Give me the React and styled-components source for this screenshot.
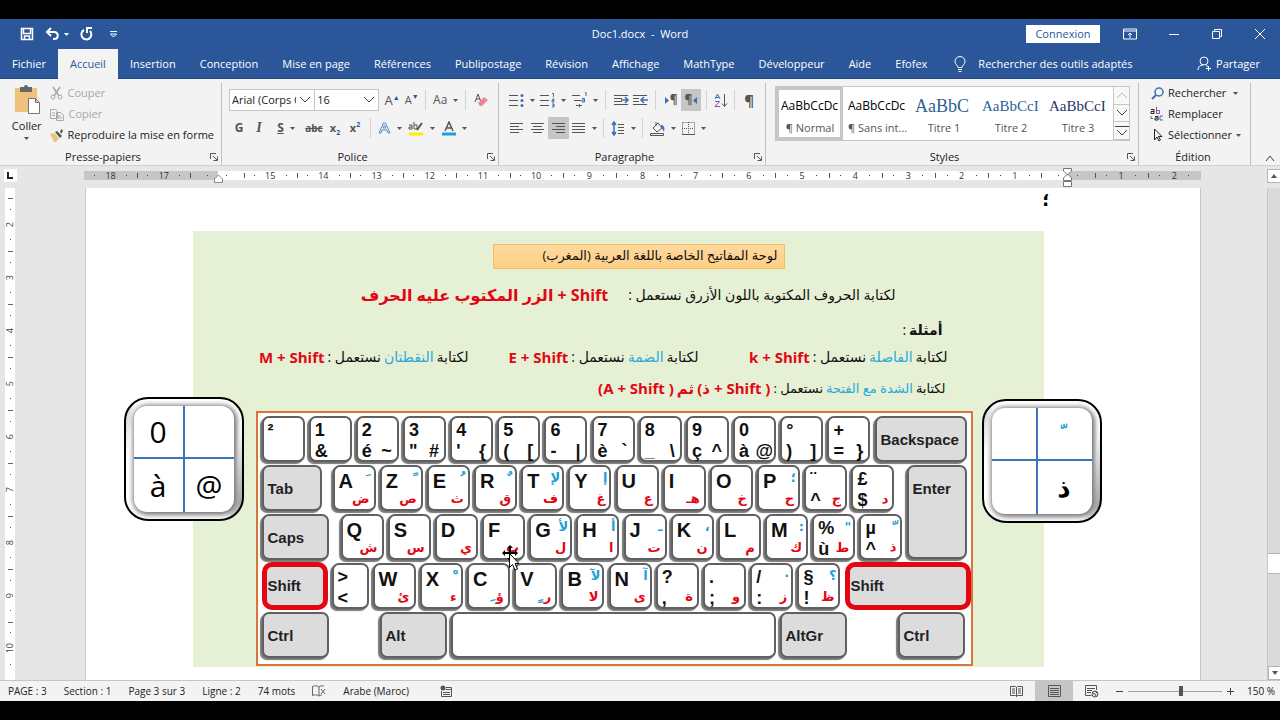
import React from "react";
import styled, { createGlobalStyle, css } from "styled-components";

const ui = '"Open Sans", "Noto Sans", sans-serif';
const arabic = '"Open Sans", "DejaVu Sans", sans-serif';

const GlobalStyle = createGlobalStyle`
  * { box-sizing: border-box; }
  body { margin: 0; background: #000; font-family: ${ui}; font-size: 11px; line-height: 16px; color: #222; }
  button, input, select { font: inherit; color: inherit; margin: 0; }
  button { background: none; border: 0; padding: 0; cursor: pointer; }
  svg { display: block; flex: none; }
`;

const Letterbox = styled.div`
  min-height: 100vh;
  padding: 19px 0;
  background: #000;
  display: flex;
  flex-direction: column;
`;

const Window = styled.div`
  flex: 1;
  display: flex;
  flex-direction: column;
  background: #e6e6e6;
  overflow: hidden;
`;

/* Title bar and tabs */
const TitleBar = styled.header`
  height: 30px;
  background: #2b579a;
  color: #fff;
  display: grid;
  grid-template-columns: 1fr auto 1fr;
  align-items: center;
`;

const QuickAccess = styled.div`
  display: flex;
  align-items: center;
  gap: 10px;
  padding-left: 19px;
`;

const IconButton = styled.button`
  display: flex;
  align-items: center;
  justify-content: center;
  gap: 4px;
`;

const WindowControls = styled.div`
  display: flex;
  justify-content: flex-end;
  align-items: center;
  padding-right: 14px;
  gap: 31px;
`;

const SignIn = styled.button`
  width: 74px;
  height: 18px;
  margin-right: -8px;
  background: #fff;
  color: #2b579a;
`;

const TabBar = styled.nav`
  height: 30px;
  background: #2b579a;
  color: #fff;
  display: flex;
  align-items: stretch;
  border-bottom: 1px solid #1e4682;
`;

const Tab = styled.button`
  padding: 0 12px;
  height: 29px;
  white-space: nowrap;
  ${(p) => p.$active && css`background: #f3f3f3; color: #2b579a; height: 30px;`}
`;

const TellMe = styled.label`
  display: flex;
  align-items: center;
  gap: 12px;
  padding-left: 15px;
`;

const TellMeInput = styled.input`
  width: 170px;
  border: 0;
  padding: 0;
  background: transparent;
  &::placeholder { color: #fff; opacity: 1; }
`;

const Share = styled(IconButton)`
  margin-left: auto;
  padding-right: 20px;
`;

/* Ribbon */
const Ribbon = styled.section`
  height: 87px;
  background: #f3f3f3;
  border-bottom: 1px solid #d2d2d2;
  display: flex;
  color: #444;
`;

const Group = styled.section`
  ${(p) => (p.$width ? css`width: ${p.$width}px;` : css`flex: 1; min-width: 0;`)}
  margin-top: 4px;
  border-right: 1px solid #c0c0c0;
  display: flex;
  flex-direction: column;
`;

const GroupBody = styled.div`
  flex: 1;
  padding: 0 7px;
  display: flex;
  ${(p) => p.$stack && css`flex-direction: column; padding-top: 6px; gap: 6px;`}
`;

const GroupFooter = styled.footer`
  height: 16px;
  padding-right: 3px;
  display: grid;
  grid-template-columns: 1fr auto 1fr;
  align-items: center;
  color: #222;
  &::before { content: ""; }
  & > span { margin-right: ${(p) => (p.$launcher ? 12 : 0)}px; }
  & > button { justify-self: end; }
`;

const PasteButton = styled.button`
  width: 40px;
  display: flex;
  flex-direction: column;
  align-items: center;
  gap: 3px;
  color: #222;
  padding-top: 2px;
`;

const CommandList = styled.div`
  display: flex;
  flex-direction: column;
  gap: 5px;
  padding-top: 2px;
  margin-left: 4px;
`;

const Command = styled.button`
  height: 16px;
  display: flex;
  align-items: center;
  gap: 4px;
  color: ${(p) => (p.$dim ? "#a8a8a8" : "#222")};
  white-space: nowrap;
`;

const ToolRow = styled.div`
  height: 22px;
  display: flex;
  align-items: center;
`;

const Tool = styled.button`
  width: ${(p) => p.$w || 20}px;
  height: 22px;
  display: flex;
  align-items: center;
  justify-content: center;
  gap: ${(p) => (p.$tight ? 1 : 6)}px;
  background: ${(p) => (p.$on ? "#c6c6c6" : "transparent")};
  color: #555;
`;

const Divider = styled.i`
  width: 1px;
  height: 20px;
  margin: 0 5px;
  background: #d2d2d2;
`;

const Glyph = styled.span`
  font-size: ${(p) => p.$size || 12}px;
  font-weight: ${(p) => (p.$bold ? 700 : 400)};
  font-style: ${(p) => (p.$italic ? "italic" : "normal")};
  font-family: ${(p) => (p.$serif ? '"Liberation Serif", serif' : ui)};
  text-decoration: ${(p) => p.$deco || "none"};
  line-height: 16px;
  sub, sup { font-size: 7px; line-height: 0; color: #2b579a; }
`;

const Picker = styled.label`
  position: relative;
  width: ${(p) => p.$w}px;
  height: 22px;
  margin-right: ${(p) => (p.$last ? 2 : -1)}px;
  background: #fff;
  border: 1px solid #c6c6c6;
  select {
    appearance: none;
    width: 100%;
    height: 20px;
    padding: 0 18px 0 2px;
    border: 0;
    background: transparent;
    color: #222;
  }
  svg { position: absolute; right: 3px; top: 6px; pointer-events: none; }
`;

/* Style gallery */
const Gallery = styled.div`
  flex: 1;
  min-width: 0;
  height: 55px;
  margin: 3px 1px 0 2px;
  background: #fff;
  border: 1px solid #c6c6c6;
  display: flex;
`;

const Tiles = styled.div`
  flex: 1;
  min-width: 0;
  display: flex;
  overflow: hidden;
`;

const Tile = styled.button`
  width: 67px;
  flex: none;
  padding: 4px 1px 1px 2px;
  border: 3px solid ${(p) => (p.$on ? "#c6c6c6" : "transparent")};
  display: flex;
  flex-direction: column;
  justify-content: space-between;
  color: #555;
`;

const Sample = styled.span`
  width: 100%;
  height: 24px;
  overflow: hidden;
  white-space: nowrap;
  text-align: left;
  line-height: 24px;
  font-size: ${(p) => p.$size || 12}px;
  font-family: ${(p) => (p.$serif ? '"Liberation Serif", serif' : ui)};
  color: ${(p) => p.$color || "#000"};
`;

const TileName = styled.span`
  width: 100%;
  text-align: center;
  line-height: 16px;
  white-space: nowrap;
`;

const GalleryScroll = styled.div`
  width: 16px;
  display: flex;
  flex-direction: column;
  border-left: 1px solid #c6c6c6;
  button {
    flex: 1;
    display: flex;
    align-items: center;
    justify-content: center;
    border-bottom: 1px solid #c6c6c6;
    background: #f8f8f8;
  }
`;

const Collapse = styled.button`
  width: 29px;
  display: flex;
  align-items: flex-end;
  justify-content: center;
  padding: 0 0 3px 8px;
`;

/* Rulers */
const RulerBar = styled.div`
  height: 22px;
  padding-bottom: 3px;
  display: grid;
  grid-template-columns: 18px minmax(0, 1fr) 13px;
  align-items: center;
`;

const TabStop = styled.button`
  width: 13px;
  height: 13px;
  margin-left: 4px;
  background: #fff;
  display: flex;
  align-items: center;
  justify-content: center;
`;

const Ruler = styled.div`
  position: relative;
  width: 1117px;
  max-width: 100%;
  margin: 0 auto;
  height: 9px;
  display: flex;
  background: linear-gradient(90deg, #c6c6c6 12%, #fff 12%, #fff 88%, #c6c6c6 88%);
`;

const RulerCell = styled.span`
  flex: 1;
  display: flex;
  align-items: center;
  justify-content: space-evenly;
  font-size: 9px;
  line-height: 9px;
  color: #333;
  &::before, &::after { content: ""; width: 1px; height: 1px; background: #444; }
`;

const Tick = styled.span`
  width: 1px;
  margin: 2px -1px 2px 0;
  background: #555;
  z-index: 1;
`;

const Marker = styled.span`
  position: absolute;
  left: ${(p) => p.$at}%;
  top: ${(p) => (p.$hour ? -3 : 3)}px;
  margin-left: -4px;
`;

const Workspace = styled.main`
  flex: 1;
  display: grid;
  grid-template-columns: 18px minmax(0, 1fr) 13px;
`;

const SideRuler = styled.div`
  width: 10px;
  margin-left: 5px;
  padding-top: 10px;
  background: #fff;
  display: flex;
  flex-direction: column;
`;

const SideCell = styled.span`
  flex: none;
  height: 53px;
  display: flex;
  flex-direction: column;
  align-items: center;
  justify-content: space-evenly;
  font-size: 9px;
  line-height: 10px;
  color: #444;
  background: linear-gradient(#666, #666) center top / 5px 1px no-repeat;
  &::before, &::after { content: ""; width: 1px; height: 1px; background: #555; }
  b { font-weight: 400; writing-mode: vertical-rl; transform: rotate(180deg); }
`;

const ScrollBar = styled.div`
  background: #dadada;
  border-left: 1px solid #c6c6c6;
  display: flex;
  flex-direction: column;
  justify-content: flex-end;
`;

const ScrollThumb = styled.div`
  height: 21px;
  background: #fff;
  border: 1px solid #b4b4b4;
  border-width: 1px 0;
  margin-bottom: 92px;
`;

const ScrollArrow = styled.button`
  height: 14px;
  background: #fff;
  border: 1px solid #b4b4b4;
  border-right: 0;
  display: flex;
  align-items: center;
  justify-content: center;
`;

/* Document */
const Page = styled.article`
  width: 1116px;
  max-width: 100%;
  margin: 0 auto;
  padding: 0 156px 13px 107px;
  background: #fff;
  border-left: 1px solid #c6c6c6;
  border-right: 1px solid #c6c6c6;
`;

const Lead = styled.p`
  margin: 0;
  height: 43px;
  direction: rtl;
  font: 700 18px/22px ${arabic};
  color: #000;
  margin-right: -6px;
`;

const Lesson = styled.section`
  position: relative;
  background: #e5f0d4;
  height: 436px;
  padding: 13px 71px 1px 63px;
  display: flex;
  flex-direction: column;
  font-family: ${arabic};
`;

const LessonTitle = styled.h1`
  margin: 0 0 8px 237px;
  width: 292px;
  height: 25px;
  padding-right: 6px;
  background: linear-gradient(#ffd9a0, #fdcf85);
  border: 1px solid #f5bf5c;
  font: 400 13px/20px ${arabic};
  color: #111;
  direction: rtl;
`;

const Line = styled.p`
  margin: 0;
  height: ${(p) => p.$h}px;
  direction: rtl;
  display: flex;
  align-items: center;
  gap: ${(p) => p.$gap || 3}px;
  padding-right: ${(p) => p.$inset || 26}px;
  font-size: ${(p) => p.$size || 14}px;
  line-height: 20px;
  color: #111;
  white-space: nowrap;
`;

const Example = styled.span`
  width: ${(p) => p.$w}px;
  flex: none;
  display: flex;
  gap: 3px;
`;

const Blue = styled.span`color: #2aa9dc;`;

const Red = styled.strong`
  color: #e30613;
  direction: ${(p) => p.$dir || "ltr"};
  font-size: ${(p) => p.$size || 15}px;
`;

/* Keyboard */
const Keyboard = styled.div`
  width: 717px;
  margin-top: auto;
  height: 255px;
  border: 2px solid #d9743a;
  background: #fff;
  padding: 3px 4px 2px;
  display: flex;
  flex-direction: column;
  gap: 3px;
`;

const KeyRow = styled.div`
  height: 46px;
  display: flex;
  gap: ${(p) => p.$gap || 4}px;
`;

const KeyRun = styled.div`
  width: ${(p) => p.$w}px;
  flex: none;
  display: flex;
  justify-content: space-between;
`;

const MiddleBlock = styled.div`
  height: 95px;
  display: flex;
  justify-content: space-between;
`;

const MiddleRows = styled.div`
  display: flex;
  flex-direction: column;
  gap: 3px;
`;

const KeyCap = styled.div`
  width: ${(p) => p.$w || 43}px;
  height: ${(p) => p.$h || 46}px;
  flex: none;
  margin-left: ${(p) => p.$push || 0}px;
  border: 2px solid #606060;
  border-radius: 7px;
  background: ${(p) => (p.$grey ? "#dcdcdc" : "#fff")};
  box-shadow: -2px 2px 1px #777;
  display: flex;
  flex-direction: column;
  padding: 1px 1px 0 4px;
  color: #111;
  ${(p) => p.$red && css`
    border: 5px solid #e30613;
    border-radius: 10px;
    box-shadow: none;
    height: 48px;
    margin-top: -1px;
    padding-left: 1px;
    padding-top: 0;
    & > span { margin-top: 9px; }
  `}
`;

const KeyName = styled.span`
  font: 700 15px/20px "Liberation Sans", sans-serif;
  margin-top: 11px;
  color: #222;
`;

const KeyLine = styled.span`
  height: 21px;
  display: flex;
  justify-content: space-between;
  ${(p) => p.$inset && css`padding-right: 4px;`}
`;

const Main = styled.b`
  font: 700 ${(p) => (p.$small ? 18 : 20)}px/${(p) => (p.$small ? 22 : 26)}px "Liberation Sans", sans-serif;
`;

const Mark = styled.span`
  font: 700 ${(p) => p.$size || 13}px/${(p) => (p.$size ? 26 : 20)}px "DejaVu Sans", sans-serif;
  color: ${(p) => p.$c};
  margin-right: ${(p) => (p.$c === "#e30613" ? 3 : 1)}px;
`;

const LowMark = styled.span`
  font: 700 18px/12px "DejaVu Sans", sans-serif;
  color: #1e9fd8;
`;

const LowPair = styled.span`
  display: flex;
`;

const BigKey = styled.figure`
  position: absolute;
  margin: 0;
  ${(p) => (p.$side === "left" ? css`left: -69px; top: 166px;` : css`right: -58px; top: 168px;`)}
  width: 120px;
  height: 124px;
  padding: 7px 8px;
  border: 2px solid #000;
  border-radius: 24px;
  background: linear-gradient(100deg, #c4c4c4, #fff 8%, #fff 88%, #8c8c8c);
`;

const BigKeyFace = styled.div`
  height: 106px;
  border-radius: 13px;
  background: #fff;
  box-shadow: 1px 1px 5px 2px #777;
  display: grid;
  grid-template-columns: ${(p) => p.$first || 51}px 1fr;
  grid-template-rows: 1fr 1fr;
  & > span {
    display: flex;
    align-items: center;
    justify-content: center;
    font-size: 30px;
    line-height: 40px;
    color: #000;
  }
  & > span:nth-child(odd) { border-right: 2px solid #3c74ba; }
  & > span:nth-child(-n + 2) { border-bottom: 2px solid #3c74ba; }
`;

const Pointer = styled.span`
  position: absolute;
  left: 309px;
  top: 314px;
`;

/* Status bar */
const StatusBar = styled.footer`
  height: 21px;
  background: #f3f3f3;
  border-top: 1px solid #c6c6c6;
  padding: 0 5px 0 8px;
  display: flex;
  align-items: center;
  gap: 17px;
  color: #222;
  font-size: 10px;
  white-space: nowrap;
`;

const MacroIcon = styled.span`margin-left: 14px;`;

const ViewTools = styled.div`
  margin-left: auto;
  height: 20px;
  display: flex;
  align-items: center;
`;

const ViewButton = styled.button`
  width: 38px;
  height: 20px;
  display: flex;
  align-items: center;
  justify-content: center;
  background: ${(p) => (p.$on ? "#c6c6c6" : "transparent")};
`;

const ZoomButton = styled.button`
  width: 17px;
  display: flex;
  justify-content: center;
`;

const ZoomSlider = styled.input`
  appearance: none;
  width: 94px;
  height: 12px;
  background: linear-gradient(#a0a0a0, #a0a0a0) center / 100% 1px no-repeat;
  &::-webkit-slider-thumb {
    appearance: none;
    width: 4px;
    height: 10px;
    background: #555;
  }
`;

const ZoomValue = styled.button`
  width: 36px;
  text-align: right;
`;

/* Icons */
const Svg = ({ w = 16, h = 16, children, ...rest }) => (
  <svg width={w} height={h} viewBox={`0 0 ${w} ${h}`} fill="none" stroke="currentColor" aria-hidden="true" {...rest}>{children}</svg>
);
const Caret = () => <Svg w={5} h={3} stroke="none"><path d="M0 0h5L2.500 3z" fill="#555" /></Svg>;
const Chevron = ({ up, w = 12, color = "#444" }) => (
  <Svg w={w} h={8} stroke={color}><path d={up ? `M1 7L${w / 2} 2L${w - 1} 7` : `M1 1L${w / 2} 6L${w - 1} 1`} /></Svg>
);
const lines = (xs, ys) => ys.map((y, i) => `M${xs[i][0]} ${y + 0.5}H${xs[i][1]}`).join("");
const AlignIcon = ({ kind }) => {
  const xs = {
    left: [[1, 14], [1, 10], [1, 14], [1, 10]],
    center: [[1, 14], [3, 12], [1, 14], [3, 12]],
    right: [[1, 14], [5, 14], [1, 14], [5, 14]],
    justify: [[1, 14], [1, 14], [1, 14], [1, 14]],
  }[kind];
  return <Svg w={15} h={12}><path d={lines(xs, [1, 4, 7, 10])} /></Svg>;
};
const ListIcon = ({ kind }) => (
  <Svg w={15} h={16}>
    <path d={kind === "multi" ? "M0 3.500H8M2 8.500H9M4 13.500H10" : "M0 3.500H9M0 8.500H9M0 13.500H9"} />
    {kind === "bullet" && <g fill="#3c6eb4" stroke="none"><circle cx="13" cy="3.500" r="1.500" /><circle cx="13" cy="8.500" r="1.500" /><circle cx="13" cy="13.500" r="1.500" /></g>}
    {kind === "number" && <path stroke="#3c6eb4" d="M12 1.500h1.500V5M12 7h2v1.500h-2v1.500h2.500M12 12h2v3h-2M12.500 13.500H14" />}
    {kind === "multi" && <path stroke="#3c6eb4" d="M13 .5h1V4M10 6.500h2.500V10H10V8h2.500M7.500 12v3.500" />}
  </Svg>
);
const IndentIcon = ({ out }) => (
  <Svg w={17} h={13}>
    <path d={out ? "M1 1.500H15M1 4.500h6M1 7.500h6M1 10.500H15" : "M1 1.500H15M1 4.500h8M1 7.500h8M1 10.500H15"} />
    <path stroke="#3c6eb4" strokeWidth="1.500" d={out ? "M16 6H9M12 3L9 6l3 3" : "M8 6h7M12 3l3 3-3 3"} />
  </Svg>
);
const Launcher = () => (
  <IconButton aria-label="Options du groupe">
    <Svg w={8} h={8} stroke="#555"><path d="M.5 6V.5H6M3 3l4 4M7.500 3.500v4h-4" /></Svg>
  </IconButton>
);
const Pilcrow = ({ size = 14 }) => <Glyph $size={size} $bold>¶</Glyph>;

const Footer = ({ name, launcher = true }) => (
  <GroupFooter $launcher={launcher}><span>{name}</span>{launcher && <Launcher />}</GroupFooter>
);

const BLUE = "#1e9fd8";
const RED = "#e30613";

const digitKeys = [
  ["²", "", ""], ["1", "&", ""], ["2", "é", "~"], ["3", '"', "#"], ["4", "'", "{"], ["5", "(", "["],
  ["6", "-", "|"], ["7", "è", "`"], ["8", "_", "\\"], ["9", "ç", "^"], ["0", "à", "@"], ["°", ")", "]"], ["+", "=", "}"],
];
/* main letter, Shift mark, Arabic letter, lower-left sign, lower mark */
const rowA = [
  ["A", "\uFE76", "ض"], ["Z", "\uFE70", "ص"], ["E", "\uFE78", "ث"], ["R", "\uFE72", "ق"], ["T", "لإ", "ف"], ["Y", "إ", "غ"],
  ["U", "", "ع"], ["I", "", "هـ"], ["O", "", "خ"], ["P", "؛", "ح"], ["¨", "", "ج", "^"], ["£", "", "د", "$"],
];
const rowQ = [
  ["Q", "", "ش"], ["S", "", "س"], ["D", "", "ي"], ["F", "", "ب"], ["G", "لأ", "ل"], ["H", "أ", "ا"],
  ["J", "ـ", "ت"], ["K", "،", "ن"], ["L", "", "م"], ["M", ":", "ك"], ["%", '"', "ط", "ù"], ["µ", "\uFE7C", "ذ", "^"],
];
const rowW = [
  ["W", "", "ئ"], ["X", "\uFE7E", "ء"], ["C", "", "ؤ", "", "\uFE7A"], ["V", "", "ر", "", "\uFE74"], ["B", "لآ", "لا"], ["N", "آ", "ى"],
  ["?", "", "ة", ","], [".", "", "و", ";"], ["/", "·", "ز", ":"], ["§", "؟", "ظ", "!"],
];
const isDiacritic = (s) => s >= "\uFE70" && s <= "\uFE7F";

const DigitKey = ({ k: [top, left, right] }) => (
  <KeyCap>
    <KeyLine><Main $small>{top}</Main></KeyLine>
    <KeyLine $inset={right !== "@"}><Main $small>{left}</Main><Main $small>{right}</Main></KeyLine>
  </KeyCap>
);
const LetterKey = ({ k: [main, blue, red, sub = "", low = ""] }) => (
  <KeyCap>
    <KeyLine>
      <Main $small={!!sub}>{main}</Main>
      <Mark $c={BLUE} $size={isDiacritic(blue) ? 18 : undefined}>{blue}</Mark>
    </KeyLine>
    <KeyLine>
      <Main $small>{sub}</Main>
      <LowPair>{low && <LowMark>{low}</LowMark>}<Mark $c={RED}>{red}</Mark></LowPair>
    </KeyLine>
  </KeyCap>
);
const NamedKey = ({ children, ...p }) => <KeyCap $grey {...p}><KeyName>{children}</KeyName></KeyCap>;

const tabs = ["Fichier", "Accueil", "Insertion", "Conception", "Mise en page", "Références", "Publipostage", "Révision", "Affichage", "MathType", "Développeur", "Aide", "Efofex"];
const rulerLabels = [18, 17, "", 15, 14, 13, 12, 11, 10, 9, 8, 7, 6, 5, 4, 3, 2, 1, "", 1, 2];

export default function App() {
  return (
    <Letterbox>
      <GlobalStyle />
      <Window>
        <TitleBar>
          <QuickAccess>
            <IconButton aria-label="Enregistrer">
              <Svg><path d="M2.500 2.500h11v11h-11zM4.500 3v4.500h7V3M5.500 13v-3h5v3" strokeWidth="1.500" /></Svg>
            </IconButton>
            <IconButton aria-label="Annuler">
              <Svg w={15}><path strokeWidth="2" d="M6 2L2 6l4 4M2 6h7c5 0 5 7 0 7H8" /></Svg>
              <Svg w={5} h={3} stroke="none"><path d="M0 0h5L2.500 3z" fill="#fff" /></Svg>
            </IconButton>
            <IconButton aria-label="Rétablir">
              <Svg w={15}><path strokeWidth="2" d="M5 4a5 5 0 1 0 6 1M8 7V2h5" /></Svg>
            </IconButton>
            <IconButton aria-label="Personnaliser">
              <Svg w={19} h={8}><path d="M6 1.500h7M6.500 4L9.500 7l3-3z" /></Svg>
            </IconButton>
          </QuickAccess>
          <span>Doc1.docx&nbsp; -&nbsp; Word</span>
          <WindowControls>
            <SignIn>Connexion</SignIn>
            <IconButton aria-label="Options du ruban"><Svg w={14} h={12}><path d="M.5 1h13v10H.5zM1 3h12M7 10V5M5 7l2-2 2 2" /></Svg></IconButton>
            <IconButton aria-label="Réduire"><Svg w={12} h={12}><path d="M1 6.500h10" /></Svg></IconButton>
            <IconButton aria-label="Restaurer"><Svg w={12} h={12}><path d="M1.500 3.500h7v7h-7zM3.500 3V1.500h7v7H9" /></Svg></IconButton>
            <IconButton aria-label="Fermer"><Svg w={12} h={12}><path d="M1 1l10 10M11 1L1 11" /></Svg></IconButton>
          </WindowControls>
        </TitleBar>
        <TabBar>
          {tabs.map((t) => <Tab key={t} $active={t === "Accueil"}>{t}</Tab>)}
          <TellMe>
            <Svg w={12} h={16}><path d="M4 11.500c0-2-3-3-3-6a5 5 0 0 1 10 0c0 3-3 4-3 6zM4 13.500h4M4.500 15.500h3" /></Svg>
            <TellMeInput aria-label="Rechercher des outils adaptés" placeholder="Rechercher des outils adaptés" />
          </TellMe>
          <Share>
            <Svg w={15} h={15}><circle cx="7" cy="5" r="4" /><path d="M1 14c0-3 2-5 5-5M9 9.500l2 1M9 12.500h5M11.500 10v5" /></Svg>
            Partager
          </Share>
        </TabBar>

        <Ribbon>
          <Group $width={222}>
            <GroupBody>
              <PasteButton>
                <Svg w={28} h={30} stroke="none">
                  <path fill="#eec27d" d="M2 3h22v24H2z" /><path fill="#666" d="M7 2h4a2 2 0 0 1 4 0h4v5H7z" />
                  <path fill="#fff" stroke="#777" d="M15.500 13.500h7l4 4v11h-11zM22.500 13.500v4h4" />
                </Svg>
                Coller
                <Caret />
              </PasteButton>
              <CommandList>
                <Command $dim><Svg w={13} h={14}><path strokeWidth="1.500" d="M3 1l6 9M10 1L4 10" /><circle cx="3" cy="11" r="2" /><circle cx="10" cy="11" r="2" /></Svg>Couper</Command>
                <Command $dim><Svg w={14} h={13}><path d="M.5 1.500h5l2 2v7h-7zM2 5h3M2 7.500h3M6.500 4.500h4l3 3v5h-7zM8 8h3M8 10h4" /></Svg>Copier</Command>
                <Command><Svg w={13} h={13} stroke="none"><path fill="#eec27d" d="M0 5l4-1 5 5-3 4H4z" /><path fill="#555" d="M5 3l2-1 5 5-2 2zM10 2l2-2 1 2-2 3z" /></Svg>Reproduire la mise en forme</Command>
              </CommandList>
            </GroupBody>
            <Footer name="Presse-papiers" />
          </Group>

          <Group $width={277}>
            <GroupBody $stack>
              <ToolRow>
                <Picker $w={88}>
                  <select aria-label="Police" defaultValue="a"><option value="a">Arial (Corps CS)</option></select><Chevron />
                </Picker>
                <Picker $w={66} $last>
                  <select aria-label="Taille de police" defaultValue="16"><option>16</option></select><Chevron />
                </Picker>
                <Tool $w={23}><Glyph $size={13}>A<sup>▲</sup></Glyph></Tool>
                <Tool $w={17}><Glyph $size={11}>A<sup>▼</sup></Glyph></Tool>
                <Divider />
                <Tool $w={30}><Glyph $size={12}>Aa</Glyph><Caret /></Tool>
                <Divider />
                <Tool $w={20}><Svg w={14} h={14}><path d="M1 9L4 1l3 8M2 6h4" /><path fill="#e88a9b" stroke="none" d="M4 10l6-6 4 3-6 6H6z" /></Svg></Tool>
              </ToolRow>
              <ToolRow>
                <Tool><Glyph $bold>G</Glyph></Tool>
                <Tool><Glyph $italic $bold $serif $size={14}>I</Glyph></Tool>
                <Tool $w={34}><Glyph $bold $deco="underline">S</Glyph><Caret /></Tool>
                <Tool $w={22}><Glyph $size={10} $bold $deco="line-through">abc</Glyph></Tool>
                <Tool><Glyph $bold $size={11}>x<sub>2</sub></Glyph></Tool>
                <Tool><Glyph $bold $size={11}>x<sup>2</sup></Glyph></Tool>
                <Divider />
                <Tool $w={28}><Svg w={13} h={12} stroke="#5b8ac6"><path d="M1 11L5.500 1h2L12 11h-2L9 8H4l-1 3zM5 6h3L6.500 3z" /></Svg><Caret /></Tool>
                <Tool $w={34}><Svg w={16} h={15}><path stroke="#ffee00" strokeWidth="3" d="M1 13h14" /><path d="M1 4h3v4H1V6h3M6 1v7h3V4H6" /><path strokeWidth="2" d="M14 2L9 9" /></Svg><Caret /></Tool>
                <Tool $w={32}><Svg w={14} h={15}><path stroke="#1e9fd8" strokeWidth="3" d="M0 13h14" /><path strokeWidth="1.500" d="M3 10L7 1l4 9M4.500 7h5" /></Svg><Caret /></Tool>
              </ToolRow>
            </GroupBody>
            <Footer name="Police" />
          </Group>

          <Group $width={267}>
            <GroupBody $stack>
              <ToolRow>
                <Tool $w={32}><ListIcon kind="bullet" /><Caret /></Tool>
                <Tool $w={32}><ListIcon kind="number" /><Caret /></Tool>
                <Tool $w={32}><ListIcon kind="multi" /><Caret /></Tool>
                <Divider />
                <Tool><IndentIcon /></Tool>
                <Tool><IndentIcon out /></Tool>
                <Divider />
                <Tool $tight><Svg w={4} h={7} stroke="none"><path fill="#3c6eb4" d="M0 0l4 3.500L0 7z" /></Svg><Pilcrow size={12} /></Tool>
                <Tool $tight $on><Pilcrow size={12} /><Svg w={4} h={7} stroke="none"><path fill="#3c6eb4" d="M4 0L0 3.500 4 7z" /></Svg></Tool>
                <Divider />
                <Tool $w={18}><Svg w={14} h={15}><path stroke="#3c6eb4" d="M1 6l2.500-5L6 6M2 4.500h3" /><path stroke="#8a4fa0" d="M1 8.500h4.500L1 13.500h5" /><path d="M10.500 1v12M8 10.500l2.500 3 2.500-3" /></Svg></Tool>
                <Divider />
                <Tool $w={18}><Pilcrow size={15} /></Tool>
              </ToolRow>
              <ToolRow>
                <Tool $w={21}><AlignIcon kind="left" /></Tool>
                <Tool $w={21}><AlignIcon kind="center" /></Tool>
                <Tool $w={21} $on><AlignIcon kind="right" /></Tool>
                <Tool $w={29}><AlignIcon kind="justify" /><Caret /></Tool>
                <Divider />
                <Tool $w={28}><Svg w={14} h={15}><path stroke="#3c6eb4" strokeWidth="1.500" d="M3 1v13M1 4l2-3 2 3M1 11l2 3 2-3" /><path d="M7 3.500h6M7 6.500h6M7 9.500h6M7 12.500h6" /></Svg><Caret /></Tool>
                <Divider />
                <Tool $w={30}><Svg w={15} h={15}><path d="M3 7l5-5 4 5-5 4zM6 5V1M.5 12.500h13v2H.5z" /><path fill="#3c6eb4" stroke="none" d="M11 4c3 0 4 3 3 7-1-2-1-3-3-4z" /></Svg><Caret /></Tool>
                <Tool $w={32}><Svg w={13} h={13}><path strokeDasharray="1 1" d="M.5.5h12v12M.5.5v12M6.500 0v12M0 6.500h12" /><path d="M0 12.500h13" /></Svg><Caret /></Tool>
              </ToolRow>
            </GroupBody>
            <Footer name="Paragraphe" />
          </Group>

          <Group>
            <GroupBody>
              <Gallery>
                <Tiles>
                  <Tile $on><Sample>AaBbCcDc</Sample><TileName>¶ Normal</TileName></Tile>
                  <Tile><Sample>AaBbCcDc</Sample><TileName>¶ Sans int...</TileName></Tile>
                  <Tile><Sample $serif $size={18} $color="#2f5f98">AaBbC</Sample><TileName>Titre 1</TileName></Tile>
                  <Tile><Sample $serif $size={15} $color="#2f5f98">AaBbCcI</Sample><TileName>Titre 2</TileName></Tile>
                  <Tile><Sample $serif $size={15} $color="#1f3763">AaBbCcI</Sample><TileName>Titre 3</TileName></Tile>
                </Tiles>
                <GalleryScroll>
                  <button aria-label="Ligne précédente"><Chevron up color="#bbb" /></button>
                  <button aria-label="Ligne suivante"><Chevron /></button>
                  <button aria-label="Autres styles"><Svg w={14} h={12} stroke="#444"><path d="M0 1.500h14M2 5l5 5 5-5" /></Svg></button>
                </GalleryScroll>
              </Gallery>
            </GroupBody>
            <Footer name="Styles" />
          </Group>

          <Group $width={112}>
            <GroupBody>
              <CommandList>
                <Command><Svg w={14} h={13} stroke="#3c6eb4"><circle cx="9" cy="5" r="4" strokeWidth="1.500" /><path strokeWidth="2" d="M6 8l-4 4" /></Svg>Rechercher&nbsp;<Caret /></Command>
                <Command><Svg w={14} h={14}><path d="M1 2.500h3v4H1v-2h3" /><path stroke="#8a4fa0" d="M6.500 0v6.500h3v-3h-3" /><path stroke="#3c6eb4" d="M1 9v2.500h2M13 9h-3v4h3" /><path d="M5 9.500h3V13H5v-2h3" /></Svg>Remplacer</Command>
                <Command><Svg w={14} h={14}><path d="M4.500 1v11l2.500-3 2 4 1.500-1-2-3.500H12z" /></Svg>Sélectionner<Caret /></Command>
              </CommandList>
            </GroupBody>
            <Footer name="Édition" launcher={false} />
          </Group>
          <Collapse aria-label="Réduire le ruban"><Chevron up w={10} /></Collapse>
        </Ribbon>

        <RulerBar>
          <TabStop aria-label="Type de tabulation"><Svg w={7} h={7} strokeWidth="2"><path d="M1 0v6h5" /></Svg></TabStop>
          <Ruler>
            {rulerLabels.map((n, i) => (
              <React.Fragment key={i}>
                {i > 0 && <Tick />}
                <RulerCell>{n}</RulerCell>
              </React.Fragment>
            ))}
            <Marker $at={12}><Svg w={9} h={9} fill="#fff" stroke="#888"><path d="M.5 8.500V5l4-4 4 4v3.500z" /></Svg></Marker>
            <Marker $at={88} $hour><Svg w={9} h={19} fill="#fff" stroke="#777"><path d="M.5.5h8V3L4.500 7 .5 3zM.5 12.500V10l4-4 4 4v2.500zM.5 13.500h8v5h-8z" /></Svg></Marker>
          </Ruler>
          <ScrollArrow aria-label="Défiler vers le haut"><Svg w={6} h={4} stroke="none"><path d="M0 4h6L3 0z" fill="#555" /></Svg></ScrollArrow>
        </RulerBar>

        <Workspace>
          <SideRuler>
            {[2, 3, 4, 5, 6, 7, 8, 9, 10].map((n) => <SideCell key={n}><b>{n}</b></SideCell>)}
          </SideRuler>
          <Page>
            <Lead>؛</Lead>
            <Lesson>
              <LessonTitle>لوحة المفاتيح الخاصة باللغة العربية (المغرب)</LessonTitle>
              <Line $h={36} $inset={77} $gap={20}>
                <span>لكتابة الحروف المكتوبة باللون الأزرق نستعمل :</span>
                <Red $size={16} $dir="rtl">Shift + الزر المكتوب عليه الحرف</Red>
              </Line>
              <Line $h={34} $inset={30}><strong>أمثلة</strong> :</Line>
              <Line $h={20} $gap={1} $inset={25}>
                <Example $w={248}>لكتابة <Blue>الفاصلة</Blue> نستعمل : <Red>k + Shift</Red></Example>
                <Example $w={229}>لكتابة <Blue>الضمة</Blue> نستعمل : <Red>E + Shift</Red></Example>
                <Example $w={210}>لكتابة <Blue>النقطتان</Blue> نستعمل : <Red>M + Shift</Red></Example>
              </Line>
              <Line $h={42} $inset={27} $size={13}>
                لكتابة <Blue>الشدة مع الفتحة</Blue> نستعمل :{" "}
                <Red>(ذ + Shift )</Red> <Red>ثم</Red> <Red>(A + Shift )</Red>
              </Line>
              <Keyboard>
                <KeyRow>
                  <KeyRun $w={609}>{digitKeys.map((k) => <DigitKey key={k[0]} k={k} />)}</KeyRun>
                  <NamedKey $w={92}>Backspace</NamedKey>
                </KeyRow>
                <MiddleBlock>
                  <MiddleRows>
                    <KeyRow $gap={11}>
                      <NamedKey $w={60}>Tab</NamedKey>
                      <KeyRun $w={562}>{rowA.map((k) => <LetterKey key={k[0]} k={k} />)}</KeyRun>
                    </KeyRow>
                    <KeyRow $gap={12}>
                      <NamedKey $w={67}>Caps</NamedKey>
                      <KeyRun $w={562}>{rowQ.map((k) => <LetterKey key={k[0]} k={k} />)}</KeyRun>
                    </KeyRow>
                  </MiddleRows>
                  <NamedKey $w={60} $h={94}>Enter</NamedKey>
                </MiddleBlock>
                <KeyRow>
                  <NamedKey $w={66} $red>Shift</NamedKey>
                  <KeyCap $w={37}><KeyLine><Main $small>&gt;</Main></KeyLine><KeyLine><Main $small>&lt;</Main></KeyLine></KeyCap>
                  <KeyRun $w={468}>{rowW.map((k) => <LetterKey key={k[0]} k={k} />)}</KeyRun>
                  <NamedKey $w={126} $red>Shift</NamedKey>
                </KeyRow>
                <KeyRow>
                  <NamedKey $w={67}>Ctrl</NamedKey>
                  <NamedKey $w={67} $push={47}>Alt</NamedKey>
                  <KeyCap $w={325} />
                  <NamedKey $w={67}>AltGr</NamedKey>
                  <NamedKey $w={67} $push={47}>Ctrl</NamedKey>
                </KeyRow>
              </Keyboard>
              <BigKey $side="left"><BigKeyFace><span>0</span><span /><span>à</span><span>@</span></BigKeyFace></BigKey>
              <BigKey $side="right">
                <BigKeyFace $first={46}><span /><span><Mark $c={BLUE} $size={20}>{"\uFE7C"}</Mark></span><span /><span><Mark $c="#000" $size={26}>ذ</Mark></span></BigKeyFace>
              </BigKey>
              <Pointer>
                <Svg w={18} h={26} stroke="none">
                  <path fill="#000" d="M8 0l3 3H9v4h4V5l3 3-3 3V9H9v4h2l-3 3-3-3h2V9H3v2L0 8l3-3v2h4V3H5z" />
                  <path fill="#fff" stroke="#000" d="M7.500 8.500v14l3-3 2.500 5.500 2.500-1-2.500-5.500h4z" />
                </Svg>
              </Pointer>
            </Lesson>
          </Page>
          <ScrollBar>
            <ScrollThumb />
            <ScrollArrow aria-label="Défiler vers le bas"><Svg w={6} h={4} stroke="none"><path d="M0 0h6L3 4z" fill="#555" /></Svg></ScrollArrow>
          </ScrollBar>
        </Workspace>

        <StatusBar>
          <span>PAGE : 3</span>
          <span>Section : 1</span>
          <span>Page 3 sur 3</span>
          <span>Ligne : 2</span>
          <span>74 mots</span>
          <Svg w={14} h={12} stroke="#666"><path d="M7 2v9M7 2C5 .5 3 .5 .5 1.500v9c2-1 4-1 6.500.5 1-.5 2-1 3-1M7 2c1-1 3-1.500 5-1M9 4l4 5M13 4L9 9" /></Svg>
          <span>Arabe (Maroc)</span>
          <MacroIcon><Svg w={12} h={12} stroke="#555"><circle cx="3" cy="3" r="2.500" fill="#555" stroke="none" /><path d="M6 2.500h5.500v9h-10V6M3 7.500h7M3 9.500h7M6 4.500h5" /></Svg></MacroIcon>
          <ViewTools>
            <ViewButton aria-label="Mode Lecture"><Svg w={13} h={12} stroke="#555"><path d="M6.500 2v10M.5 1.500h5l1 1 1-1h5v9h-5l-1 1-1-1h-5zM2 4h3M2 6h3M2 8h3M8 4h3M8 6h3M8 8h3" /></Svg></ViewButton>
            <ViewButton $on aria-label="Page"><Svg w={13} h={12} stroke="#555"><path d="M.5.5h12v11H.5zM2 3.500h9M2 5.500h9M2 7.500h9M2 9.500h9" /></Svg></ViewButton>
            <ViewButton aria-label="Mode Web"><Svg w={14} h={13} stroke="#555"><path d="M11.500 5V.5H.5v10h6M2 3.500h8M2 5.500h5M2 7.500h4" /><circle cx="10" cy="9" r="3" fill="#ddd" /><path d="M8 8l2 1 1 2M10 6l2 2" /></Svg></ViewButton>
            <ZoomButton aria-label="Zoom arrière"><Svg w={8} h={8} stroke="#444"><path d="M0 4.500h7" /></Svg></ZoomButton>
            <ZoomSlider type="range" aria-label="Zoom" min="0" max="100" defaultValue="57" />
            <ZoomButton aria-label="Zoom avant"><Svg w={8} h={8} stroke="#444"><path d="M0 4.500h7M3.500 1v7" /></Svg></ZoomButton>
            <ZoomValue>150 %</ZoomValue>
          </ViewTools>
        </StatusBar>
      </Window>
    </Letterbox>
  );
}
